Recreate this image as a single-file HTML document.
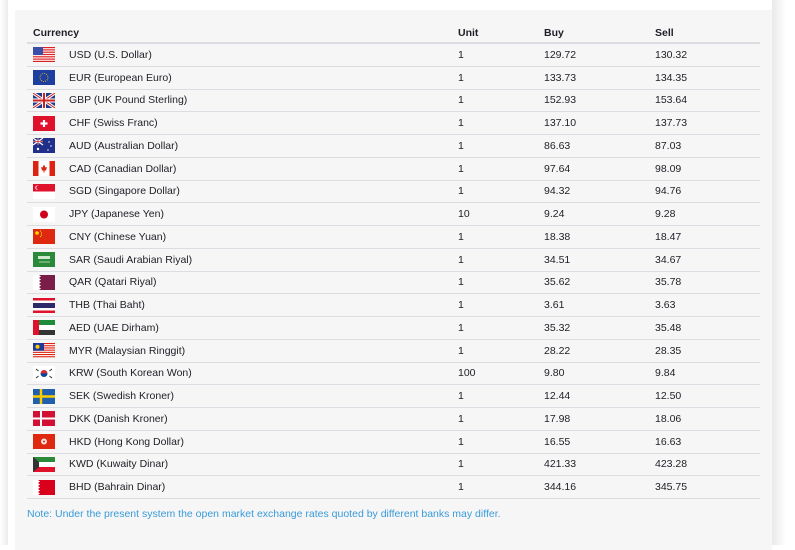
<!DOCTYPE html>
<html><head><meta charset="utf-8"><style>
body{margin:0;width:795px;height:545px;background:#fff;font-family:"Liberation Sans",sans-serif;overflow:hidden;position:relative}
.sh{position:absolute;left:0;top:0;width:8px;height:545px;background:linear-gradient(90deg,#fff,#ececec)}
.sh2{position:absolute;left:772px;top:0;width:23px;height:545px;background:linear-gradient(90deg,#e9e9e9,#fff 60%)}
.panel{position:absolute;left:15px;top:10px;width:757px;height:540px;background:#f6f6f7}
table{position:absolute;left:27px;top:22px;width:733px;border-collapse:collapse;font-size:10.5px;color:#1e1e24}
th{text-align:left;font-weight:bold;height:21px;padding:2px 0 0 0;border-bottom:2px solid #dcdde3;vertical-align:middle;box-sizing:border-box}
td{height:21.75px;padding:0;border-bottom:1px solid #dcdde3;vertical-align:middle}
td svg{display:block;margin-left:6px}
.note{position:absolute;left:27px;top:508px;font-size:10.5px;color:#3a9bd8}
</style></head><body>
<div class="sh"></div><div class="sh2"></div>
<div class="panel"></div>
<table>
<colgroup><col style="width:42px"><col style="width:389px"><col style="width:86px"><col style="width:111px"><col></colgroup>
<tr><th colspan="2" style="padding-left:6px">Currency</th><th>Unit</th><th>Buy</th><th>Sell</th></tr>
<tr><td><svg width="22" height="15"><rect width="22" height="15" fill="#fff"/><g fill="#d22"><rect y="0" width="22" height="1.2"/><rect y="2.3" width="22" height="1.2"/><rect y="4.6" width="22" height="1.2"/><rect y="6.9" width="22" height="1.2"/><rect y="9.2" width="22" height="1.2"/><rect y="11.5" width="22" height="1.2"/><rect y="13.8" width="22" height="1.2"/></g><rect width="10" height="8" fill="#3c4fa8"/></svg></td><td>USD (U.S. Dollar)</td><td>1</td><td>129.72</td><td>130.32</td></tr>
<tr><td><svg width="22" height="15"><rect width="22" height="15" fill="#1f3fa0"/><circle cx="11" cy="7.5" r="4" fill="none" stroke="#fc0" stroke-width=".8" stroke-dasharray="1 1.1"/></svg></td><td>EUR (European Euro)</td><td>1</td><td>133.73</td><td>134.35</td></tr>
<tr><td><svg width="22" height="15"><rect width="22" height="15" fill="#1f3a8a"/><path d="M0 0L22 15M22 0L0 15" stroke="#fff" stroke-width="3"/><path d="M0 0L22 15M22 0L0 15" stroke="#c22" stroke-width="1"/><path d="M11 0V15M0 7.5H22" stroke="#fff" stroke-width="4"/><path d="M11 0V15M0 7.5H22" stroke="#c22" stroke-width="2"/></svg></td><td>GBP (UK Pound Sterling)</td><td>1</td><td>152.93</td><td>153.64</td></tr>
<tr><td><svg width="22" height="15"><rect width="22" height="15" fill="#e0112b"/><path d="M11 4V11M7.5 7.5H14.5" stroke="#fff" stroke-width="2.2"/></svg></td><td>CHF (Swiss Franc)</td><td>1</td><td>137.10</td><td>137.73</td></tr>
<tr><td><svg width="22" height="15"><rect width="22" height="15" fill="#1f2f8a"/><path d="M0 0L10 7M10 0L0 7M5 0V7M0 3.5H10" stroke="#fff" stroke-width="1.2"/><path d="M5 0V7M0 3.5H10" stroke="#c22" stroke-width=".7"/><g fill="#fff"><circle cx="5" cy="11" r="1.2"/><circle cx="16" cy="4" r=".7"/><circle cx="18" cy="8" r=".7"/><circle cx="15" cy="12" r=".7"/></g></svg></td><td>AUD (Australian Dollar)</td><td>1</td><td>86.63</td><td>87.03</td></tr>
<tr><td><svg width="22" height="15"><rect width="22" height="15" fill="#fff"/><rect width="5.5" height="15" fill="#d21"/><rect x="16.5" width="5.5" height="15" fill="#d21"/><path d="M11 3.5L12.5 6.5L14 6L13 9.5H11.5V11.5H10.5V9.5H9L8 6L9.5 6.5Z" fill="#d21"/></svg></td><td>CAD (Canadian Dollar)</td><td>1</td><td>97.64</td><td>98.09</td></tr>
<tr><td><svg width="22" height="15"><rect width="22" height="15" fill="#fff"/><rect width="22" height="7.5" fill="#e0112b"/><circle cx="4.5" cy="3.7" r="2.2" fill="#fff"/><circle cx="5.3" cy="3.7" r="2" fill="#e0112b"/></svg></td><td>SGD (Singapore Dollar)</td><td>1</td><td>94.32</td><td>94.76</td></tr>
<tr><td><svg width="22" height="15"><rect width="22" height="15" fill="#fff"/><circle cx="11" cy="7.5" r="4" fill="#d0011b"/></svg></td><td>JPY (Japanese Yen)</td><td>10</td><td>9.24</td><td>9.28</td></tr>
<tr><td><svg width="22" height="15"><rect width="22" height="15" fill="#de2910"/><circle cx="4" cy="4" r="1.8" fill="#fd0"/><g fill="#fd0"><circle cx="7.5" cy="2" r=".6"/><circle cx="8.5" cy="4" r=".6"/><circle cx="8.5" cy="6" r=".6"/><circle cx="7.5" cy="7.5" r=".6"/></g></svg></td><td>CNY (Chinese Yuan)</td><td>1</td><td>18.38</td><td>18.47</td></tr>
<tr><td><svg width="22" height="15"><rect width="22" height="15" fill="#2a8a3a"/><rect x="5" y="4" width="12" height="3" fill="#cfe6cf"/><path d="M6 10H17" stroke="#cfe6cf" stroke-width=".8"/></svg></td><td>SAR (Saudi Arabian Riyal)</td><td>1</td><td>34.51</td><td>34.67</td></tr>
<tr><td><svg width="22" height="15"><rect width="22" height="15" fill="#7a1d47"/><path d="M0 0H6L8 1.5L6 3L8 4.5L6 6L8 7.5L6 9L8 10.5L6 12L8 13.5L6 15H0Z" fill="#fff"/></svg></td><td>QAR (Qatari Riyal)</td><td>1</td><td>35.62</td><td>35.78</td></tr>
<tr><td><svg width="22" height="15"><rect width="22" height="15" fill="#e0112b"/><rect y="2.5" width="22" height="10" fill="#fff"/><rect y="5" width="22" height="5" fill="#2d2a6a"/></svg></td><td>THB (Thai Baht)</td><td>1</td><td>3.61</td><td>3.63</td></tr>
<tr><td><svg width="22" height="15"><rect width="22" height="5" fill="#1f8a3a"/><rect y="5" width="22" height="5" fill="#fff"/><rect y="10" width="22" height="5" fill="#333"/><rect width="6" height="15" fill="#e0112b"/></svg></td><td>AED (UAE Dirham)</td><td>1</td><td>35.32</td><td>35.48</td></tr>
<tr><td><svg width="22" height="15"><rect width="22" height="15" fill="#fff"/><g fill="#d21"><rect y="0" width="22" height="1.1"/><rect y="2.2" width="22" height="1.1"/><rect y="4.4" width="22" height="1.1"/><rect y="6.6" width="22" height="1.1"/><rect y="8.8" width="22" height="1.1"/><rect y="11" width="22" height="1.1"/><rect y="13.2" width="22" height="1.1"/></g><rect width="11" height="7.7" fill="#1f3a9a"/><circle cx="4.5" cy="3.8" r="2" fill="#fc0"/></svg></td><td>MYR (Malaysian Ringgit)</td><td>1</td><td>28.22</td><td>28.35</td></tr>
<tr><td><svg width="22" height="15"><rect width="22" height="15" fill="#fff"/><path d="M11 7.5m-3.5 0a3.5 3.5 0 0 1 7 0Z" fill="#cd2e3a"/><path d="M11 7.5m3.5 0a3.5 3.5 0 0 1-7 0Z" fill="#0047a0"/><g stroke="#333" stroke-width="1"><path d="M3 3L5.5 5M16.5 5L19 3M3 12L5.5 10M16.5 10L19 12"/></g></svg></td><td>KRW (South Korean Won)</td><td>100</td><td>9.80</td><td>9.84</td></tr>
<tr><td><svg width="22" height="15"><rect width="22" height="15" fill="#1f5fae"/><path d="M8 0V15M0 7.5H22" stroke="#fc0" stroke-width="2.4"/></svg></td><td>SEK (Swedish Kroner)</td><td>1</td><td>12.44</td><td>12.50</td></tr>
<tr><td><svg width="22" height="15"><rect width="22" height="15" fill="#d21034"/><path d="M8 0V15M0 7.5H22" stroke="#fff" stroke-width="2"/></svg></td><td>DKK (Danish Kroner)</td><td>1</td><td>17.98</td><td>18.06</td></tr>
<tr><td><svg width="22" height="15"><rect width="22" height="15" fill="#de2910"/><circle cx="11" cy="7.5" r="3" fill="#fff" opacity=".85"/><circle cx="11" cy="7.5" r="1" fill="#de2910"/></svg></td><td>HKD (Hong Kong Dollar)</td><td>1</td><td>16.55</td><td>16.63</td></tr>
<tr><td><svg width="22" height="15"><rect width="22" height="5" fill="#2a8a3a"/><rect y="5" width="22" height="5" fill="#fff"/><rect y="10" width="22" height="5" fill="#e0112b"/><path d="M0 0L6 5V10L0 15Z" fill="#333"/></svg></td><td>KWD (Kuwaity Dinar)</td><td>1</td><td>421.33</td><td>423.28</td></tr>
<tr><td><svg width="22" height="15"><rect width="22" height="15" fill="#d9001b"/><path d="M0 0H5L7 1.5L5 3L7 4.5L5 6L7 7.5L5 9L7 10.5L5 12L7 13.5L5 15H0Z" fill="#fff"/></svg></td><td>BHD (Bahrain Dinar)</td><td>1</td><td>344.16</td><td>345.75</td></tr>
</table>
<div class="note">Note: Under the present system the open market exchange rates quoted by different banks may differ.</div>
</body></html>
